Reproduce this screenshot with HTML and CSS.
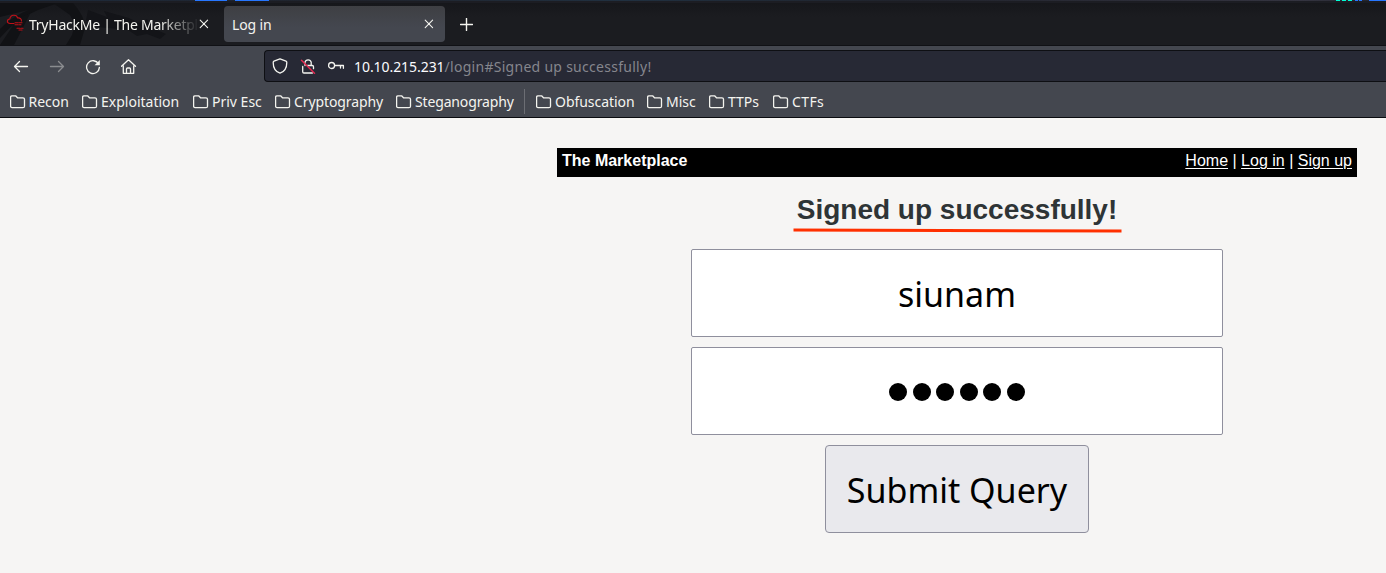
FILE: index.html
```html
<!DOCTYPE html>
<html lang="en">
<head>
<meta charset="utf-8">
<title>Log in</title>
<link rel="stylesheet" href="styles.css">
</head>
<body>
<svg class="defs" width="0" height="0"><defs>
  <symbol id="folder" viewBox="0 0 16 14"><path d="M2 .8h3.6l1.9 2H13a1.5 1.5 0 0 1 1.5 1.5v6.9a1.5 1.5 0 0 1-1.5 1.5H2A1.5 1.5 0 0 1 .6 11.2V2.2A1.4 1.4 0 0 1 2 .8z"/></symbol>
  <symbol id="close" viewBox="0 0 10 10"><path d="M1.2 1.2l7.4 7.4M8.6 1.2L1.2 8.6"/></symbol>
</defs></svg>
<div class="desktop-strip"><i class="b1"></i><i class="b2"></i><i class="g"></i><i class="g"></i><i class="g"></i><i class="b3"></i><i class="b4"></i><i class="b5"></i></div>
<header class="tabs">
  <svg class="dragon" width="180" height="42" viewBox="0 3 180 42">
    <path fill="#101114" d="M0 3h58L38 10Q16 19 0 38V29Q10 18 28 10L0 17z"/>
    <path fill="#111215" d="M53 3h20q12 13 12 25l-5 17H66l6-10q4-11-2-20z"/>
    <path fill="#131418" d="M88 10l19 7-3-6 25 7 10 5 8-4 3 8 16 7-6 5-13-5-10 2-9-6-30-3-12-7z"/>
    <path fill="#111215" d="M0 45l18-27 12-4L14 45z"/>
  </svg>
  <div class="tab">
    <svg class="cloud" width="18" height="18" viewBox="0 0 18 18"><path d="M8 9.5H4.2C.5 9.5.6 5.2 3.8 5 4.3.3 10.8.2 11.5 4c2.3-.5 4 .8 4 3"/><path stroke-dasharray="3 1" d="M9 8.7h7M9 10.8h6M11 14.3h6M13 16h3"/></svg>
    <span class="tab-title fade">TryHackMe | The Marketpl</span>
    <svg class="x" width="10" height="10"><use href="#close"/></svg>
  </div>
  <div class="tab active"><span class="tab-title">Log in</span><svg class="x" width="10" height="10"><use href="#close"/></svg></div>
  <svg class="plus" width="13" height="13" viewBox="0 0 13 13"><path d="M6.5.5v12M.5 6.5h12"/></svg>
</header>
<nav class="toolbar">
  <div class="buttons">
    <svg width="16" height="16" viewBox="0 0 16 16"><path d="M14.5 7.5h-13M6.5 2.5l-5 5 5 5"/></svg>
    <svg class="off" width="16" height="16" viewBox="0 0 16 16"><path d="M1.5 7.5h13M9.5 2.5l5 5-5 5"/></svg>
    <svg width="16" height="16" viewBox="0 0 16 16"><path d="M13.6 5A6.4 6.4 0 1 0 14.4 8.4"/><path class="solid" d="M14.8 1v5.2H9.6z"/></svg>
    <svg width="16" height="16" viewBox="0 0 16 16"><path d="M.5 7.2L7.5.7l7 6.500M2.300 6.500v7.800h10.400V6.500M5.500 14v-4q0-1 1-1h2q1 0 1 1v4"/></svg>
  </div>
  <div class="urlbar">
    <svg width="16" height="16" viewBox="0 0 16 16"><path d="M8 .8l6 2.4c.5.2.8.6.8 1.2C14.8 10 12.2 13.7 8 15.2 3.8 13.7 1.2 10 1.2 4.4c0-.6.3-1 .8-1.2z"/></svg>
    <svg width="16" height="16" viewBox="0 0 16 16"><path d="M5 7.500V4.200a3.200 3.200 0 0 1 6.200 0V7.500M7.500 7.500h4.800q1.200 0 1.200 1.200v2M2.700 8.500v5.200q0 1.300 1.200 1.300h8.500"/><path class="slash" d="M1.500 2.300L14.500 15.300"/></svg>
    <svg width="17" height="16" viewBox="0 0 17 16"><circle cx="3.6" cy="7.5" r="3"/><path d="M6.600 7.500h8.800v2.800M12.500 7.500v2.500"/></svg>
    <span class="url"><b>10.10.215.231</b><span>/login#Signed up successfully!</span></span>
  </div>
</nav>
<div class="bookmarks">
  <span class="bm w1"><svg><use href="#folder"/></svg>Recon</span>
  <span class="bm w2"><svg><use href="#folder"/></svg>Exploitation</span>
  <span class="bm w3"><svg><use href="#folder"/></svg>Priv Esc</span>
  <span class="bm w4"><svg><use href="#folder"/></svg>Cryptography</span>
  <span class="bm w5"><svg><use href="#folder"/></svg>Steganography</span>
  <span class="bm w6"><svg><use href="#folder"/></svg>Obfuscation</span>
  <span class="bm w7"><svg><use href="#folder"/></svg>Misc</span>
  <span class="bm w8"><svg><use href="#folder"/></svg>TTPs</span>
  <span class="bm w9"><svg><use href="#folder"/></svg>CTFs</span>
</div>
<main class="page">
  <div class="market"><strong>The Marketplace</strong><span><a href="#">Home</a> | <a href="#">Log in</a> | <a href="#">Sign up</a></span></div>
  <h1>Signed up successfully!</h1>
  <svg class="underline" width="330" height="6" viewBox="0 0 330 6"><path d="M.5 3L328.500 4"/></svg>
  <form>
    <div class="field">siunam</div>
    <div class="field dots"><i></i><i></i><i></i><i></i><i></i><i></i></div>
    <button type="button">Submit Query</button>
  </form>
</main>
</body>
</html>
```
FILE: styles.css
```css
* { box-sizing: border-box; }
body { margin: 0; height: 573px; overflow: hidden; background: #f6f5f4; font-family: "Noto Sans", sans-serif; }
svg { display: block; flex: none; fill: none; stroke: #f4f4ef; stroke-width: 1.3; stroke-linejoin: round; stroke-linecap: round; }
.defs { position: absolute; }
.desktop-strip { height: 3px; display: flex; align-items: flex-start; background: linear-gradient(90deg, #1d2b3c, #20232c 25%, #203040 45%, #20232c 65%, #343440 94%, #20232c) 0 0 / 100% 1px no-repeat #1c1d23; }
.desktop-strip i { height: 1px; flex: none; background: #2777ff; }
.desktop-strip .b1 { width: 32px; margin-left: 195px; }
.desktop-strip .b2 { width: 34px; margin-left: 8px; margin-right: 1067px; }
.desktop-strip .g { width: 4px; margin-right: 2px; background: #00ffd5; }
.desktop-strip .b3 { width: 3px; margin-left: 1px; }
.desktop-strip .b4 { width: 3px; margin-left: 1px; margin-right: 7px; }
.desktop-strip .b5 { width: 17px; }
.tabs { position: relative; height: 43px; display: flex; align-items: flex-start; padding: 3px 0 0 2px; background: linear-gradient(#16171b, #1b1c20 14px); border-bottom: 1px solid #101115; }
.dragon { position: absolute; left: 0; top: 0; stroke: none; }
.tab { position: relative; width: 216px; height: 36px; display: flex; align-items: center; padding: 0 10px 0 4px; margin-right: 6px; }
.tab.active { width: 221px; padding: 0 11px 0 8px; background: linear-gradient(#3e3f43, #44474f 60%); border-radius: 4px; }
.tab-title { flex: 1; font-size: 14px; line-height: 20px; color: #f4f4ef; white-space: nowrap; margin-top: 1px; }
.active .tab-title { letter-spacing: -.15px; }
.fade { flex: none; width: 168px; margin: 1px 2px 0 5px; letter-spacing: -.25px; -webkit-mask-image: linear-gradient(90deg, #000 130px, transparent 170px); mask-image: linear-gradient(90deg, #000 130px, transparent 170px); }
.cloud { stroke: #c11119; stroke-width: 1.1; margin-top: -2px; }
.x { stroke-width: 1.1; }
.plus { margin: 12px 0 0 9px; stroke-width: 1.4; }
.toolbar { height: 41px; background: #44474f; display: flex; }
.buttons { width: 264px; display: flex; gap: 20px; padding: 13px 0 0 13px; }
.off { opacity: .4; }
.solid { fill: #f4f4ef; stroke: none; }
.urlbar { flex: 1; height: 32px; margin-top: 4px; border: 1px solid #0e0f13; border-right: 0; border-radius: 4px 0 0 4px; background: #272935; display: flex; align-items: center; gap: 12px; padding-left: 7px; }
.slash { stroke: #e22850; stroke-width: 1.5; }
.url { font-size: 14px; line-height: 20px; margin: 1px 0 0 -3px; color: #85868d; white-space: pre; letter-spacing: .28px; }
.url b { font-weight: 400; color: #fbfbfe; letter-spacing: -.06px; }
.bookmarks { height: 31px; background: #44474f; border-bottom: 1px solid #0b0c10; display: flex; padding-left: 9.5px; color: #f4f4ef; font-size: 14px; line-height: 30px; }
.bm { display: flex; align-items: flex-start; white-space: nowrap; height: 30px; gap: 3px; }
.bm svg { width: 16px; height: 14px; margin-top: 8px; }
.w1 { width: 72.5px; } .w2 { width: 111px; } .w3 { width: 82px; } .w4 { width: 121px; letter-spacing: -.1px; }
.w5 { width: 140px; position: relative; letter-spacing: -.15px; } .w6 { width: 111px; letter-spacing: -.05px; } .w7 { width: 62px; } .w8 { width: 64px; } .w9 { letter-spacing: .4px; }
.w5::after { content: ""; position: absolute; left: 128px; top: 2px; width: 1px; height: 25px; background: #6c6e74; }
.page { width: 800px; margin-left: 557px; padding-top: 30px; font-family: "Liberation Sans", Arial, sans-serif; color: #2e3436; }
.market { height: 29px; display: flex; justify-content: space-between; padding: 3px 5px; background: #000; color: #fff; font-size: 16px; line-height: 19px; }
.market a { color: #fff; text-underline-offset: 2px; text-decoration-thickness: 1px; text-decoration-skip-ink: auto; }
h1 { margin: 16px 0 0; text-align: center; font-size: 28px; line-height: 34px; height: 34px; font-weight: 700; white-space: nowrap; }
.underline { margin: 0 0 0 236px; stroke: #ff3000; stroke-width: 3; stroke-linecap: butt; }
form { display: flex; flex-direction: column; align-items: center; gap: 10px; margin-top: 16px; font-family: "Noto Sans", sans-serif; color: #000; font-size: 34px; }
.field { width: 532px; height: 88px; border: 1px solid #8f8f9d; border-radius: 2px; background: #fff; display: flex; align-items: center; justify-content: center; padding-top: 1px; }
.dots { gap: 5.6px; }
.dots i { width: 18px; height: 18px; border-radius: 50%; background: #000; }
button { width: 264px; height: 88px; padding: 1px 0 0; border: 1px solid #8f8f9d; border-radius: 4px; background: #e9e9ed; color: #000; font: 34px "Noto Sans", sans-serif; white-space: nowrap; }
```
